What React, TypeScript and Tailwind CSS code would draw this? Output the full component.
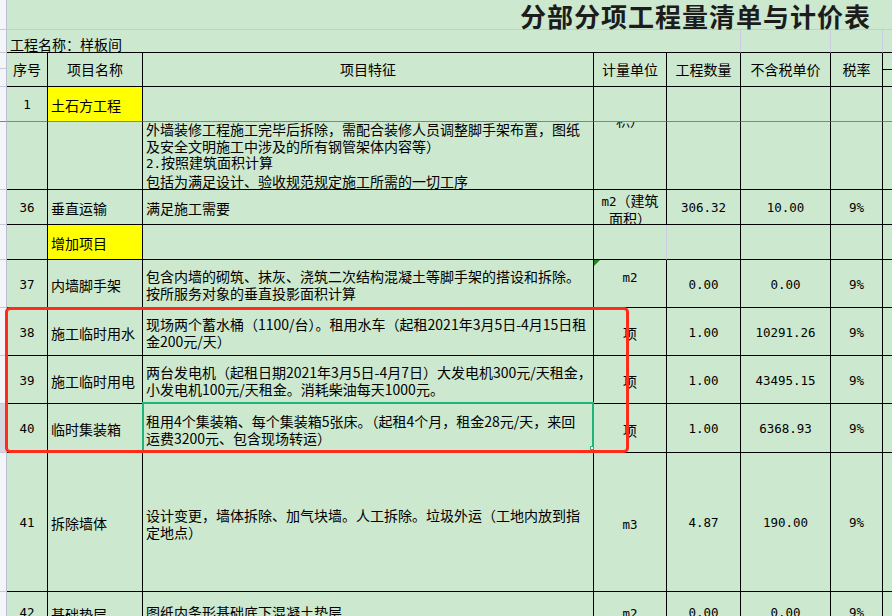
import React from 'react'

const ROW = 'grid grid-cols-[7px_41px_95px_451px_73px_74px_90px_52px_1fr]'
const SANS = "font-['Noto_Sans_CJK_SC','Noto_Sans',sans-serif]"
const MONO = "font-['DejaVu_Sans_Mono','Liberation_Mono',monospace]"

type Item = {
  h: string
  no?: string
  name?: string
  yellow?: boolean
  feat?: string[]
  unit?: string[]
  qty?: string
  price?: string
  tax?: string
  top?: boolean
  sel?: boolean
  green?: boolean
  soft?: boolean
}

const rows: Item[] = [
  { h: 'h-[35px]', no: '1', name: '土石方工程', yellow: true, green: true },
  { h: 'h-[35px]', no: '36', name: '垂直运输', feat: ['满足施工需要'], unit: ['m2（建筑', '面积）'], qty: '306.32', price: '10.00', tax: '9%' },
  { h: 'h-[35px]', name: '增加项目', yellow: true, soft: true },
  {
    h: 'h-[48px]', no: '37', name: '内墙脚手架',
    feat: ['包含内墙的砌筑、抹灰、浇筑二次结构混凝土等脚手架的搭设和拆除。', '按所服务对象的垂直投影面积计算'],
    unit: ['m2', '\u00a0'], qty: '0.00', price: '0.00', tax: '9%',
  },
  {
    h: 'h-[48px]', no: '38', name: '施工临时用水',
    feat: ['现场两个蓄水桶（1100/台）。租用水车（起租2021年3月5日-4月15日租', '金200元/天）'],
    unit: ['项'], qty: '1.00', price: '10291.26', tax: '9%',
  },
  {
    h: 'h-[48px]', no: '39', name: '施工临时用电',
    feat: ['两台发电机（起租日期2021年3月5日-4月7日）大发电机300元/天租金，', '小发电机100元/天租金。消耗柴油每天1000元。'],
    unit: ['项'], qty: '1.00', price: '43495.15', tax: '9%',
  },
  {
    h: 'h-[49px]', no: '40', name: '临时集装箱', sel: true,
    feat: ['租用4个集装箱、每个集装箱5张床。（起租4个月，租金28元/天，来回', '运费3200元、包含现场转运）'],
    unit: ['项'], qty: '1.00', price: '6368.93', tax: '9%',
  },
  {
    h: 'h-[139px]', no: '41', name: '拆除墙体',
    feat: ['设计变更，墙体拆除、加气块墙。人工拆除。垃圾外运（工地内放到指', '定地点）'],
    unit: ['m3'], qty: '4.87', price: '190.00', tax: '9%',
  },
  {
    h: 'h-[40px]', no: '42', name: '基础垫层', top: true,
    feat: ['图纸内条形基础底下混凝土垫层'],
    unit: ['m2'], qty: '0.00', price: '0.00', tax: '9%',
  },
]

// ascii runs in the unit column use the half-width mono face
function mix(s: string) {
  return s.split(/([A-Za-z0-9.]+)/).map((p, i) =>
    /^[A-Za-z0-9.]+$/.test(p)
      ? <span key={i} className={`${MONO} text-[12.5px]`}>{p}</span>
      : <span key={i}>{p}</span>
  )
}

function Row({ it }: { it: Item }) {
  const b = it.green ? 'border-b border-b-[#3aae70]' : 'border-b border-b-black'
  const al = it.top ? 'items-start pt-[12px]' : 'items-center pt-[3px]'
  const vcol = it.top ? 'justify-start pt-[12px]' : 'justify-center pt-[3px]'
  const cell = `border-r border-r-black ${b} flex overflow-hidden ${al}`
  return (
    <div className={`${ROW} ${it.h}`}>
      <div className={`border-r border-r-[#b9c0d4] ${it.green ? 'border-b border-b-[#3aae70]' : 'border-b border-b-[#c6cad8]'} ${it.sel ? 'bg-[#d5d8e1]' : 'bg-[#f4f5f9]'}`} />
      <div className={`${cell} justify-center ${MONO} text-[12.5px]`}>{it.no}</div>
      <div className={`${cell} pl-[3px] whitespace-nowrap ${it.yellow ? 'bg-[#ffff00]' : ''}`}>{it.name}</div>
      <div className={`border-r border-r-black ${b} overflow-hidden flex flex-col items-start ${vcol} pl-[3px] leading-[17px]`}>
        {it.feat?.map((l, i) => <div key={i} className="whitespace-nowrap">{l}</div>)}
      </div>
      <div className={`border-r ${it.soft ? 'border-r-[#c9cce2]' : 'border-r-black'} ${b} overflow-hidden flex flex-col items-center ${vcol} text-center leading-[16px]`}>
        {it.unit?.map((l, i) => <div key={i} className="whitespace-nowrap">{mix(l)}</div>)}
      </div>
      <div className={`${cell} justify-center ${MONO} text-[12.5px]`}>{it.qty}</div>
      <div className={`${cell} justify-center ${MONO} text-[12.5px]`}>{it.price}</div>
      <div className={`${cell} justify-center ${MONO} text-[12.5px]`}>{it.tax}</div>
      <div className={`${b}`} />
    </div>
  )
}

export default function App() {
  const hd = 'border-r border-r-black border-b border-b-black flex items-center justify-center whitespace-nowrap'
  return (
    <div className={`relative w-[892px] h-[616px] overflow-hidden bg-[#cce8cf] text-[14px] text-black ${SANS}`}>
      {/* title */}
      <div className="grid grid-cols-[7px_1fr] h-[30px]">
        <div className="border-r border-r-[#b9c0d4] border-b border-b-[#c6cad8] bg-[#f4f5f9]" />
        <div className="border-b border-b-[#c6cad8] flex items-center justify-end pr-[21px] pt-[3px]">
          <span className="font-bold text-[26px] tracking-[1px] text-[#1c1c1c] leading-none">分部分项工程量清单与计价表</span>
        </div>
      </div>

      {/* project name */}
      <div className={`${ROW} h-[23px]`}>
        <div className="border-r border-r-[#b9c0d4] border-b border-b-[#c6cad8] bg-[#f4f5f9]" />
        <div className="col-span-5 border-r border-r-[#c9cce2] border-b border-b-black flex items-end pl-[3px] leading-[16px] whitespace-nowrap">工程名称：样板间</div>
        <div className="border-r border-r-[#c9cce2] border-b border-b-black" />
        <div className="border-r border-r-[#c9cce2] border-b border-b-black" />
        <div className="border-b border-b-black" />
      </div>

      {/* header */}
      <div className={`${ROW} h-[34px]`}>
        <div className="border-r border-r-[#b9c0d4] border-b border-b-[#c6cad8] bg-[#f4f5f9] flex flex-col">
          <div className="h-[16px] border-b border-b-[#c6cad8]" />
        </div>
        <div className={hd}>序号</div>
        <div className={hd}>项目名称</div>
        <div className={hd}>项目特征</div>
        <div className={hd}>计量单位</div>
        <div className={hd}>工程数量</div>
        <div className={hd}>不含税单价</div>
        <div className={hd}>税率</div>
        <div className="border-b border-b-black">
          <div className="h-[17px] border-b border-b-black" />
        </div>
      </div>

      <Row it={rows[0]} />

      {/* row cut by the frozen pane */}
      <div className={`${ROW} h-[68px]`}>
        <div className="border-r border-r-[#b9c0d4] border-b border-b-[#c6cad8] bg-[#f4f5f9]" />
        <div className="border-r border-r-black border-b border-b-black" />
        <div className="border-r border-r-black border-b border-b-black" />
        <div className="border-r border-r-black border-b border-b-black flex flex-col justify-end pl-[3px] leading-[16.5px] overflow-hidden">
          <div className="whitespace-nowrap">外墙装修工程施工完毕后拆除，需配合装修人员调整脚手架布置，图纸</div>
          <div className="whitespace-nowrap">及安全文明施工中涉及的所有钢管架体内容等）</div>
          <div className="whitespace-nowrap"><span className={`${MONO} text-[12.5px]`}>2.</span>按照建筑面积计算</div>
          <div className="whitespace-nowrap">包括为满足设计、验收规范规定施工所需的一切工序</div>
        </div>
        <div className="border-r border-r-black border-b border-b-black overflow-hidden flex flex-col items-center">
          <div className="-mt-[10px] leading-[16px] whitespace-nowrap">积）</div>
        </div>
        <div className="border-r border-r-black border-b border-b-black" />
        <div className="border-r border-r-black border-b border-b-black" />
        <div className="border-r border-r-black border-b border-b-black" />
        <div className="border-b border-b-black" />
      </div>

      {rows.slice(1).map((it, i) => <Row key={i} it={it} />)}

      {/* error marker */}
      <div className="absolute left-[594px] top-[260px] w-0 h-0 border-t-[6px] border-t-[#1b8a1b] border-r-[6px] border-r-transparent" />

      {/* selected cell */}
      <div className="absolute left-[142px] top-[402px] w-[452px] h-[51px] border-2 border-[#1fb57a]" />
      <div className="absolute left-[590px] top-[446px] w-[4px] h-[4px] bg-white border border-[#1fb57a]" />

      {/* red annotation box */}
      <div className="absolute left-[5px] top-[307px] w-[624px] h-[146px] border-[3px] border-[#ff2b1b] rounded-[5px]" />
    </div>
  )
}
